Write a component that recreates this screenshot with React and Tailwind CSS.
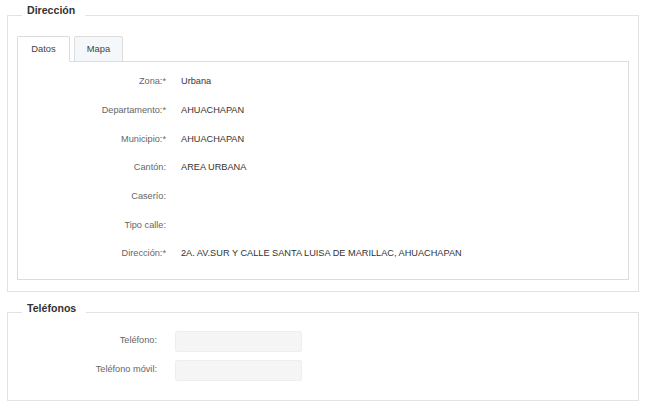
import { useState } from 'react';

const FONT = { fontFamily: '"Liberation Sans", Arial, sans-serif' };

const DIRECCION = [
  { label: 'Zona:*', value: 'Urbana' },
  { label: 'Departamento:*', value: 'AHUACHAPAN' },
  { label: 'Municipio:*', value: 'AHUACHAPAN' },
  { label: 'Cantón:', value: 'AREA URBANA' },
  { label: 'Caserío:', value: '' },
  { label: 'Tipo calle:', value: '' },
  { label: 'Dirección:*', value: '2A. AV.SUR Y CALLE SANTA LUISA DE MARILLAC, AHUACHAPAN' },
];

function Section({ title, children, className = '', legendClass = 'ml-[14px]' }) {
  return (
    <fieldset className={`border border-[#e3e3e3] mx-[7px] ${className}`}>
      <legend className={`${legendClass} pl-[5px] pr-[10px] pb-[10px] text-[10.6px] leading-[14px] font-bold text-[#333]`}>
        {title}
      </legend>
      {children}
    </fieldset>
  );
}

export default function App() {
  const [tab, setTab] = useState('datos');

  return (
    <div className="bg-white w-[646px] h-[411px] pt-[3px] text-[9.2px] text-[#333]" style={FONT}>
      <Section title="Dirección" className="px-[9px] pt-[9px] pb-[11px]" legendClass="ml-[5px]">
        <div className="flex items-end gap-[4px]">
          {['datos', 'mapa'].map(t => (
            <button
              key={t}
              type="button"
              onClick={() => setTab(t)}
              className={`h-[26px] border border-[#dcdcdc] rounded-t-[2px] text-[9.4px] text-[#444] -mb-[1px] ${
                tab === t ? 'bg-white border-b-white w-[53px]' : 'bg-[#f4f8fb] border-b-[#dcdcdc] w-[49px]'
              }`}
            >
              {t === 'datos' ? 'Datos' : 'Mapa'}
            </button>
          ))}
        </div>
        <div className="border border-[#dcdcdc] pt-[6px] pb-[10px]">
          {DIRECCION.map(r => (
            <div key={r.label} className="flex items-center h-[28.67px]">
              <span className="w-[148px] text-right text-[#666]">{r.label}</span>
              <span className="ml-[15px] text-[#333]">{r.value}</span>
            </div>
          ))}
        </div>
      </Section>

      <Section title="Teléfonos" className="mt-[9px] pt-[6px] pb-[19px]">
        <div className="flex flex-col gap-[8px]">
          {['Teléfono:', 'Teléfono móvil:'].map(l => (
            <div key={l} className="flex items-center">
              <span className="w-[149px] text-right text-[#666]">{l}</span>
              <input
                type="text"
                className="ml-[18px] w-[127px] h-[21px] bg-[#f5f5f5] border border-[#eeeeee] rounded-[2px] outline-none"
              />
            </div>
          ))}
        </div>
      </Section>
    </div>
  );
}
